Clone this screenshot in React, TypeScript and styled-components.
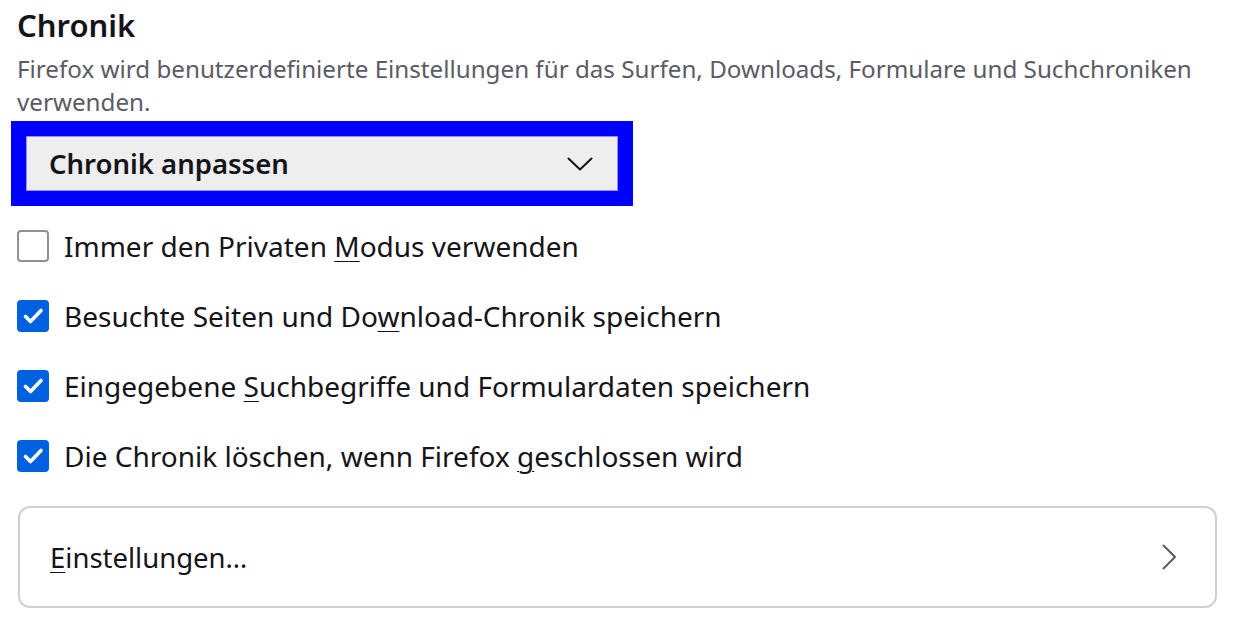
import React, { useState } from 'react';
import styled, { createGlobalStyle } from 'styled-components';

const GlobalStyle = createGlobalStyle`
  html, body {
    margin: 0;
    padding: 0;
    background: #ffffff;
  }
  body {
    font-family: 'Noto Sans', 'Open Sans', sans-serif;
    color: #15141a;
  }
`;

const Section = styled.section`
  width: 1217px;
  padding: 5px 0 0 17px;
  box-sizing: border-box;
`;

const Heading = styled.h2`
  margin: 0;
  font-size: 31px;
  font-weight: 600;
  line-height: 40px;
  color: #15141a;
`;

const Description = styled.p`
  margin: 7px 0 0;
  font-size: 24.2px;
  line-height: 33px;
  color: #5b5b66;
`;

const FocusRing = styled.div`
  margin: 3px 0 0 -6px;
  width: 622px;
  border: 15px solid #0000ff;
  box-sizing: border-box;
`;

const Select = styled.div`
  display: flex;
  align-items: center;
  justify-content: space-between;
  height: 55px;
  padding: 0 24px 0 22px;
  background: #eeeeee;
  border: 1px solid #8f8fff;
  box-sizing: border-box;
  font-size: 27.5px;
  font-weight: 600;
  color: #15141a;
`;

const Options = styled.div`
  display: flex;
  flex-direction: column;
  gap: 38px;
  margin-top: 24px;
`;

const OptionRow = styled.label`
  display: flex;
  align-items: center;
  gap: 15px;
  font-size: 28px;
  line-height: 32px;
  color: #15141a;
  cursor: default;
`;

const Box = styled.span<{ $checked: boolean }>`
  display: flex;
  align-items: center;
  justify-content: center;
  flex: none;
  width: 32px;
  height: 32px;
  border-radius: 4px;
  box-sizing: border-box;
  background: ${p => (p.$checked ? '#0061e0' : '#ffffff')};
  border: ${p => (p.$checked ? 'none' : '2px solid #8f8f9d')};
`;

const Key = styled.span`
  text-decoration: underline;
  text-underline-offset: 4px;
  text-decoration-thickness: 1px;
`;

const SettingsButton = styled.div`
  display: flex;
  align-items: center;
  justify-content: space-between;
  margin: 34px 0 0 1px;
  height: 102px;
  padding: 0 38px 0 30px;
  border: 2px solid #cfcfd8;
  border-radius: 12px;
  box-sizing: border-box;
  font-size: 27.5px;
  color: #15141a;
`;

const Check = () => (
  <svg width="24" height="24" viewBox="0 0 24 24" fill="none">
    <path d="M4.5 12.5l5 5L20 6.5" stroke="#fff" strokeWidth="3.6" strokeLinecap="round" strokeLinejoin="round" />
  </svg>
);

const ChevronDown = () => (
  <svg width="26" height="14" viewBox="0 0 26 14" fill="none">
    <path d="M1.5 1.5L13 12.5 24.5 1.5" stroke="#15141a" strokeWidth="2" strokeLinecap="round" strokeLinejoin="round" />
  </svg>
);

const ChevronRight = () => (
  <svg width="15" height="26" viewBox="0 0 15 26" fill="none">
    <path d="M1.5 1.5L13 13 1.5 24.5" stroke="#5b5b66" strokeWidth="2" strokeLinecap="round" strokeLinejoin="round" />
  </svg>
);

type Option = { id: string; before: string; key: string; after: string; checked: boolean };

const initialOptions: Option[] = [
  { id: 'private', before: 'Immer den Privaten ', key: 'M', after: 'odus verwenden', checked: false },
  { id: 'history', before: 'Besuchte Seiten und Do', key: 'w', after: 'nload-Chronik speichern', checked: true },
  { id: 'forms', before: 'Eingegebene ', key: 'S', after: 'uchbegriffe und Formulardaten speichern', checked: true },
  { id: 'clear', before: 'Die Chronik löschen, wenn Firefox ', key: 'g', after: 'eschlossen wird', checked: true },
];

export default function App() {
  const [options, setOptions] = useState(initialOptions);

  const toggle = (id: string) =>
    setOptions(opts => opts.map(o => (o.id === id ? { ...o, checked: !o.checked } : o)));

  return (
    <>
      <GlobalStyle />
      <Section>
        <Heading>Chronik</Heading>
        <Description>
          Firefox wird benutzerdefinierte Einstellungen für das Surfen, Downloads, Formulare und Suchchroniken
          verwenden.
        </Description>
        <FocusRing>
          <Select>
            <span>Chronik anpassen</span>
            <ChevronDown />
          </Select>
        </FocusRing>
        <Options>
          {options.map(o => (
            <OptionRow key={o.id} onClick={() => toggle(o.id)}>
              <Box $checked={o.checked}>{o.checked && <Check />}</Box>
              <span>
                {o.before}
                <Key>{o.key}</Key>
                {o.after}
              </span>
            </OptionRow>
          ))}
        </Options>
        <SettingsButton>
          <span>
            <Key>E</Key>instellungen…
          </span>
          <ChevronRight />
        </SettingsButton>
      </Section>
    </>
  );
}
